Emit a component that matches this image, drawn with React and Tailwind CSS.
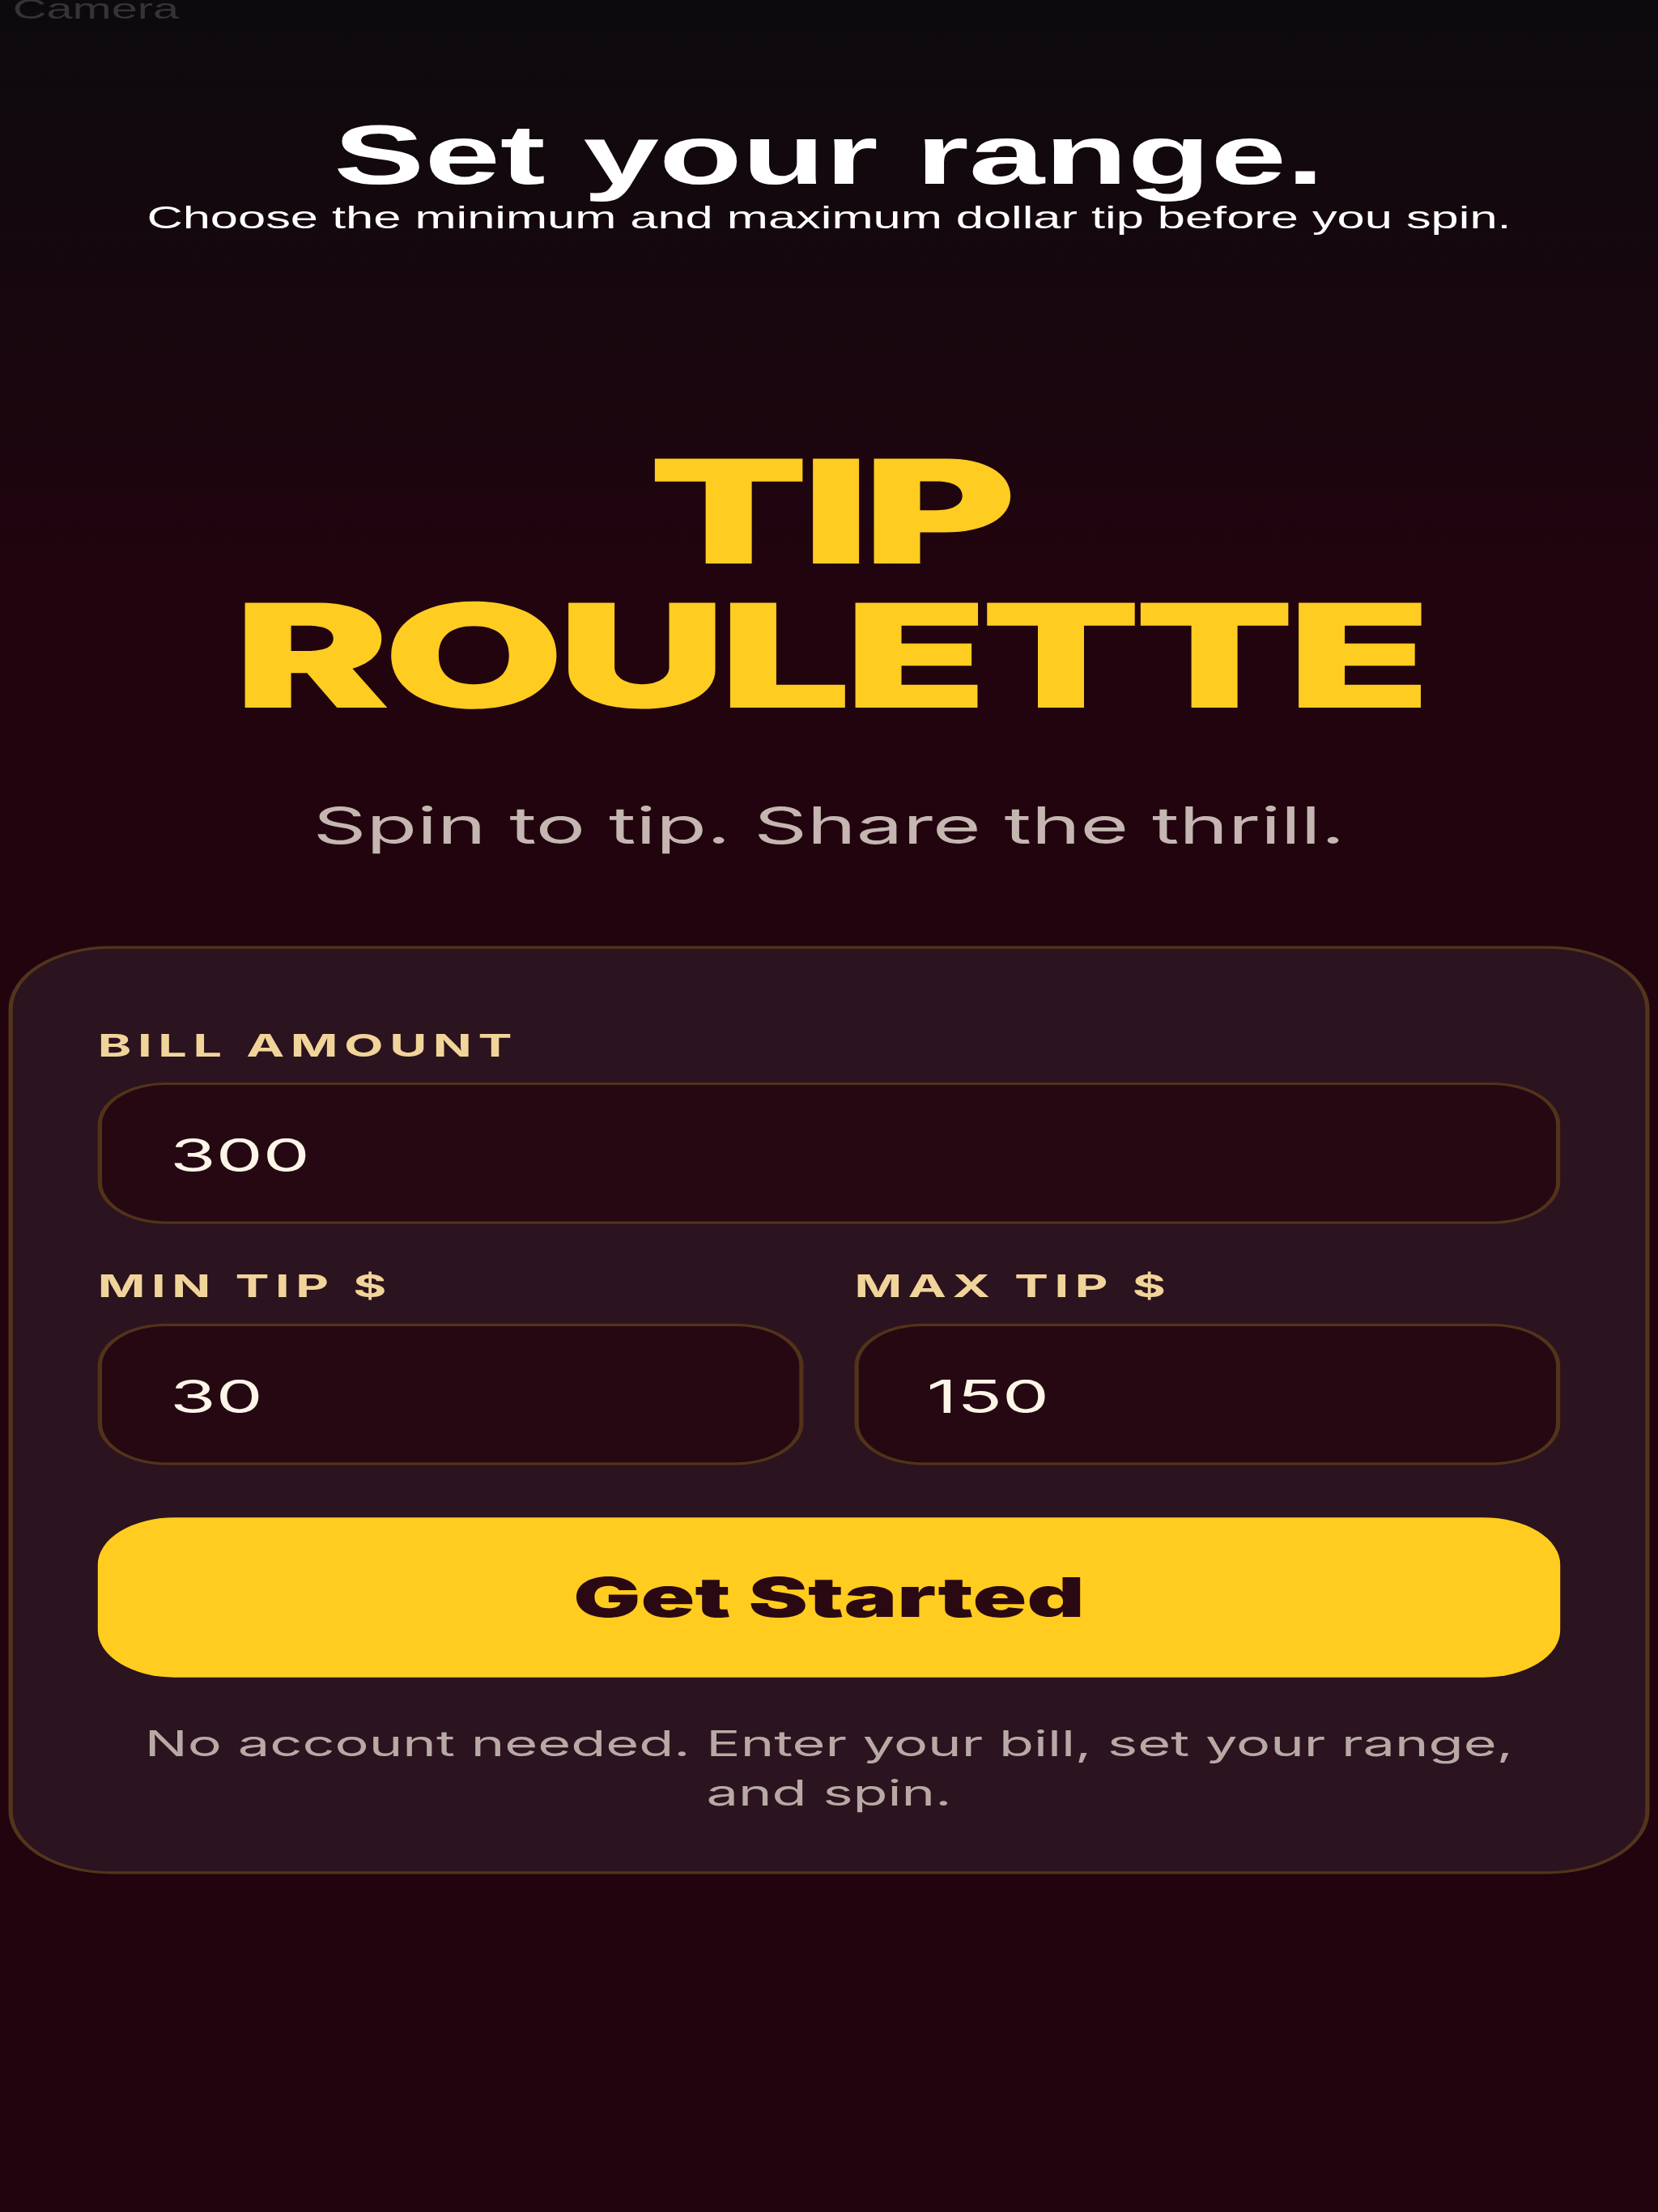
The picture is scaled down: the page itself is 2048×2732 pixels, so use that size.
const sans = "font-['Liberation_Sans',Arial,sans-serif]";

function Field({ label, value, className = "" }) {
  return (
    <div className={`flex flex-col ${className}`}>
      <label className="text-[12px] leading-[16px] font-bold tracking-[0.12em] text-[#f1d49a] font-['Inter',sans-serif] mb-[6px]">
        {label}
      </label>
      <input
        defaultValue={value}
        className="h-[54px] w-full rounded-2xl border border-[#52331a] bg-[#250812] px-4 text-[17.5px] text-[#fcf5e8] font-['Inter',sans-serif] outline-none"
      />
    </div>
  );
}

export default function App() {
  return (
    <div className="w-[2048px] h-[2732px] overflow-hidden bg-[#22040f]">
      <div className="relative w-[390px] h-[844px] origin-top-left scale-x-[5.2513] scale-y-[3.237] bg-[linear-gradient(180deg,#0c0a0d_0px,#22040f_230px)] flex flex-col items-center">
        <span className={`absolute left-[3px] top-[-5px] text-[11px] leading-[16px] text-[#363337] ${sans}`}>
          Camera
        </span>

        <h2 className={`mt-[43px] text-[32px] leading-none font-bold text-white text-center ${sans}`}>
          Set your range.
        </h2>
        <p className={`text-[11.7px] leading-[16px] text-white text-center ${sans}`}>
          Choose the minimum and maximum dollar tip before you spin.
        </p>

        <h1 className="mt-[77px] text-center text-[55px] leading-[55px] font-black tracking-[-0.03em] text-[#ffcc21] font-['Inter',sans-serif]">
          TIP
          <br />
          ROULETTE
        </h1>

        <p className="mt-[23px] text-[19.5px] leading-[28px] text-[#c5b6b2] text-center font-['Inter',sans-serif]">
          Spin to tip. Share the thrill.
        </p>

        <div className="mt-[32px] w-[386px] rounded-3xl border border-[#52351b] bg-[#2b131f] pt-[29px] px-5 pb-[19px] flex flex-col">
          <Field label="BILL AMOUNT" value="300" />
          <div className="mt-4 grid grid-cols-2 gap-3">
            <Field label="MIN TIP $" value="30" />
            <Field label="MAX TIP $" value="150" />
          </div>
          <button className="mt-5 h-[61px] w-full rounded-[18px] bg-[#ffcc1f] text-[21px] font-black text-[#2a0913] font-['Inter',sans-serif]">
            Get Started
          </button>
          <p className="mt-[15.5px] text-center text-[13.4px] leading-[19.5px] text-[#b8a9a5] font-['Inter',sans-serif]">
            No account needed. Enter your bill, set your range, and spin.
          </p>
        </div>
      </div>
    </div>
  );
}
